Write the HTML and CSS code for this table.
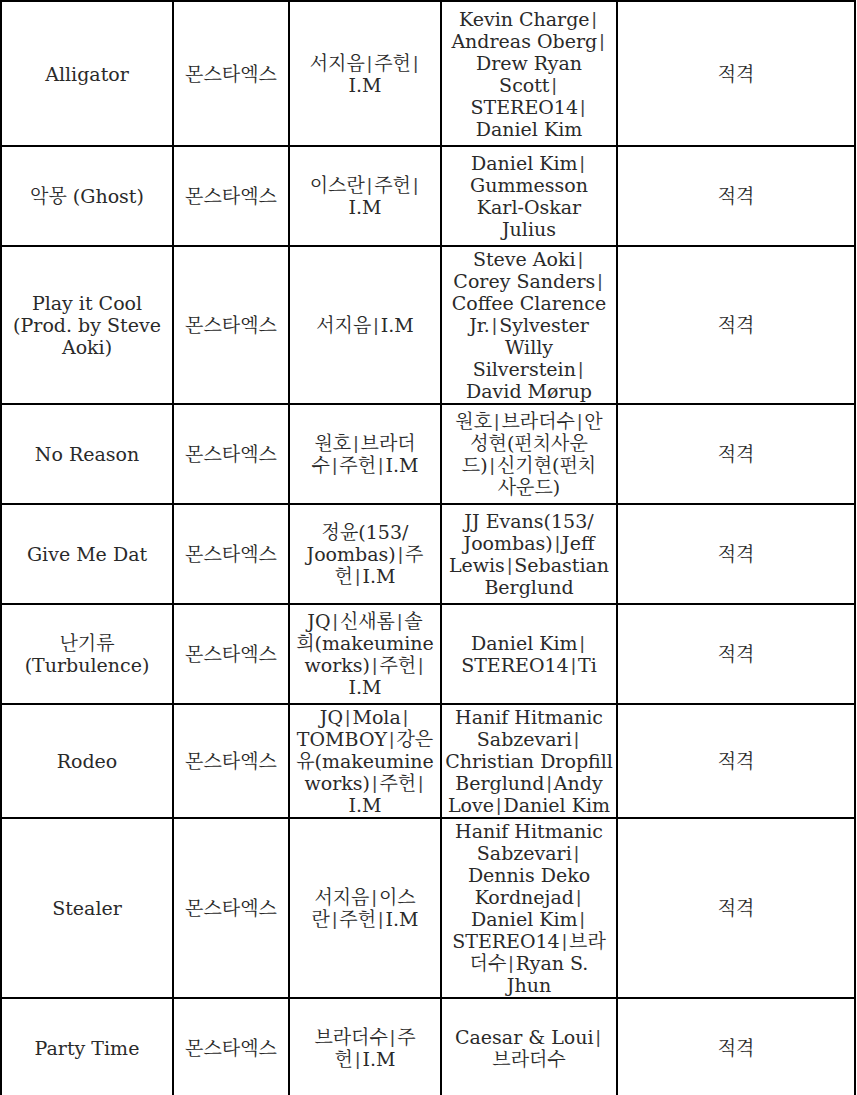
FILE: index.html
```html
<!DOCTYPE html>
<html lang="ko">
<head>
<meta charset="utf-8">
<title>Credits</title>
<link rel="stylesheet" href="styles.css">
</head>
<body>
<table class="credits">
  <colgroup>
    <col class="c-title">
    <col class="c-artist">
    <col class="c-lyric">
    <col class="c-comp">
    <col class="c-result">
  </colgroup>
  <tbody>
    <tr class="row-first">
      <td>Alligator</td>
      <td>몬스타엑스</td>
      <td>서지음<span class="sep">|</span>주헌<span class="sep">|</span><br>I.M</td>
      <td>Kevin Charge<span class="sep">|</span><br>Andreas Oberg<span class="sep">|</span><br>Drew Ryan<br>Scott<span class="sep">|</span><br>STEREO14<span class="sep">|</span><br>Daniel Kim</td>
      <td>적격</td>
    </tr>
    <tr>
      <td>악몽 (Ghost)</td>
      <td>몬스타엑스</td>
      <td>이스란<span class="sep">|</span>주헌<span class="sep">|</span><br>I.M</td>
      <td>Daniel Kim<span class="sep">|</span><br>Gummesson<br>Karl-Oskar<br>Julius</td>
      <td>적격</td>
    </tr>
    <tr>
      <td>Play it Cool<br>(Prod. by Steve<br>Aoki)</td>
      <td>몬스타엑스</td>
      <td>서지음<span class="sep">|</span>I.M</td>
      <td>Steve Aoki<span class="sep">|</span><br>Corey Sanders<span class="sep">|</span><br>Coffee Clarence<br>Jr.<span class="sep">|</span>Sylvester<br>Willy<br>Silverstein<span class="sep">|</span><br>David Mørup</td>
      <td>적격</td>
    </tr>
    <tr>
      <td>No Reason</td>
      <td>몬스타엑스</td>
      <td>원호<span class="sep">|</span>브라더<br>수<span class="sep">|</span>주헌<span class="sep">|</span>I.M</td>
      <td>원호<span class="sep">|</span>브라더수<span class="sep">|</span>안<br>성현(펀치사운<br>드)<span class="sep">|</span>신기현(펀치<br>사운드)</td>
      <td>적격</td>
    </tr>
    <tr>
      <td>Give Me Dat</td>
      <td>몬스타엑스</td>
      <td>정윤(153/<br>Joombas)<span class="sep">|</span>주<br>헌<span class="sep">|</span>I.M</td>
      <td>JJ Evans(153/<br>Joombas)<span class="sep">|</span>Jeff<br>Lewis<span class="sep">|</span>Sebastian<br>Berglund</td>
      <td>적격</td>
    </tr>
    <tr>
      <td>난기류<br>(Turbulence)</td>
      <td>몬스타엑스</td>
      <td>JQ<span class="sep">|</span>신새롬<span class="sep">|</span>솔<br>희(makeumine<br>works)<span class="sep">|</span>주헌<span class="sep">|</span><br>I.M</td>
      <td>Daniel Kim<span class="sep">|</span><br>STEREO14<span class="sep">|</span>Ti</td>
      <td>적격</td>
    </tr>
    <tr>
      <td>Rodeo</td>
      <td>몬스타엑스</td>
      <td>JQ<span class="sep">|</span>Mola<span class="sep">|</span><br>TOMBOY<span class="sep">|</span>강은<br>유(makeumine<br>works)<span class="sep">|</span>주헌<span class="sep">|</span><br>I.M</td>
      <td>Hanif Hitmanic<br>Sabzevari<span class="sep">|</span><br>Christian Dropfill<br>Berglund<span class="sep">|</span>Andy<br>Love<span class="sep">|</span>Daniel Kim</td>
      <td>적격</td>
    </tr>
    <tr>
      <td>Stealer</td>
      <td>몬스타엑스</td>
      <td>서지음<span class="sep">|</span>이스<br>란<span class="sep">|</span>주헌<span class="sep">|</span>I.M</td>
      <td>Hanif Hitmanic<br>Sabzevari<span class="sep">|</span><br>Dennis Deko<br>Kordnejad<span class="sep">|</span><br>Daniel Kim<span class="sep">|</span><br>STEREO14<span class="sep">|</span>브라<br>더수<span class="sep">|</span>Ryan S.<br>Jhun</td>
      <td>적격</td>
    </tr>
    <tr>
      <td>Party Time</td>
      <td>몬스타엑스</td>
      <td>브라더수<span class="sep">|</span>주<br>헌<span class="sep">|</span>I.M</td>
      <td>Caesar &amp; Loui<span class="sep">|</span><br>브라더수</td>
      <td>적격</td>
    </tr>
  </tbody>
</table>
</body>
</html>
```

FILE: styles.css
```css
html, body {
  margin: 0;
  padding: 0;
  background: #ffffff;
}

.credits {
  border-collapse: collapse;
  table-layout: fixed;
  width: 856px;
  font-family: "DejaVu Serif", "Noto Serif CJK KR", "Noto Sans CJK KR", serif;
  font-size: 19px;
  line-height: 22px;
  color: #2a2a2a;
}

.c-title { width: 172px; }
.c-artist { width: 116px; }
.c-lyric { width: 152px; }
.c-comp { width: 176px; }
.c-result { width: 238px; }

.credits tr {
  height: 100px;
}

.credits tr.row-first {
  height: 145px;
}

.credits td {
  border: 2px solid #000000;
  padding: 1px 2px;
  text-align: center;
  vertical-align: middle;
  white-space: nowrap;
  overflow: hidden;
}

.sep {
  display: inline-block;
  margin: 0 1.5px;
  transform: scaleY(0.85);
  color: #444444;
}
```
